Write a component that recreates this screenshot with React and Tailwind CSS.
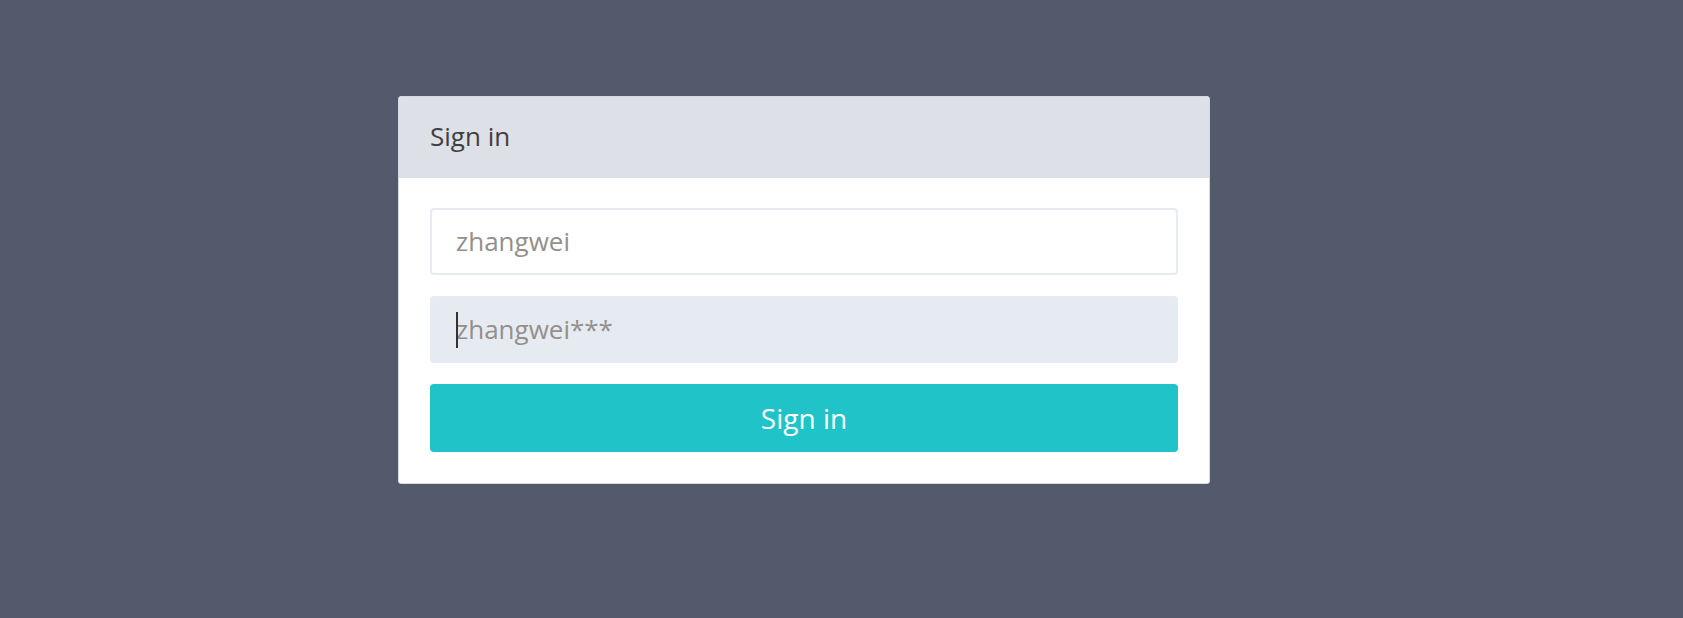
export default function App() {
  return (
    <div
      className="w-[1683px] h-[618px] bg-[#535a6b] pt-[96px] pl-[398px]"
      style={{ fontFamily: '"Open Sans", "Noto Sans", sans-serif' }}
    >
      <div className="w-[812px] bg-white border border-[#d7dae1] rounded-[3px] overflow-hidden">
        {/* header */}
        <div className="h-[81px] bg-[#dde0e7] flex items-center px-[31px] pb-[2px]">
          <span className="text-[26px] text-[#3f3f3f]">Sign in</span>
        </div>

        {/* body */}
        <div className="px-[31px] pt-[30px] pb-[31px] flex flex-col gap-[21px]">
          <div className="h-[67px] border-2 border-[#e7ebf1] rounded-[4px] bg-white flex items-center px-[24px]">
            <span className="text-[26px] text-[#948f8c]">zhangwei</span>
          </div>

          <div className="h-[67px] rounded-[4px] bg-[#e6ebf2] border-2 border-[#e6ebf2] flex items-center px-[24px] relative">
            <span className="absolute left-[24px] top-[14px] w-[2px] h-[36px] bg-[#333]" />
            <span className="text-[26px] text-[#948f8c]">zhangwei***</span>
          </div>

          <button className="h-[68px] rounded-[4px] bg-[#1fc3c8] text-white text-[28px] flex items-center justify-center">
            Sign in
          </button>
        </div>
      </div>
    </div>
  );
}
